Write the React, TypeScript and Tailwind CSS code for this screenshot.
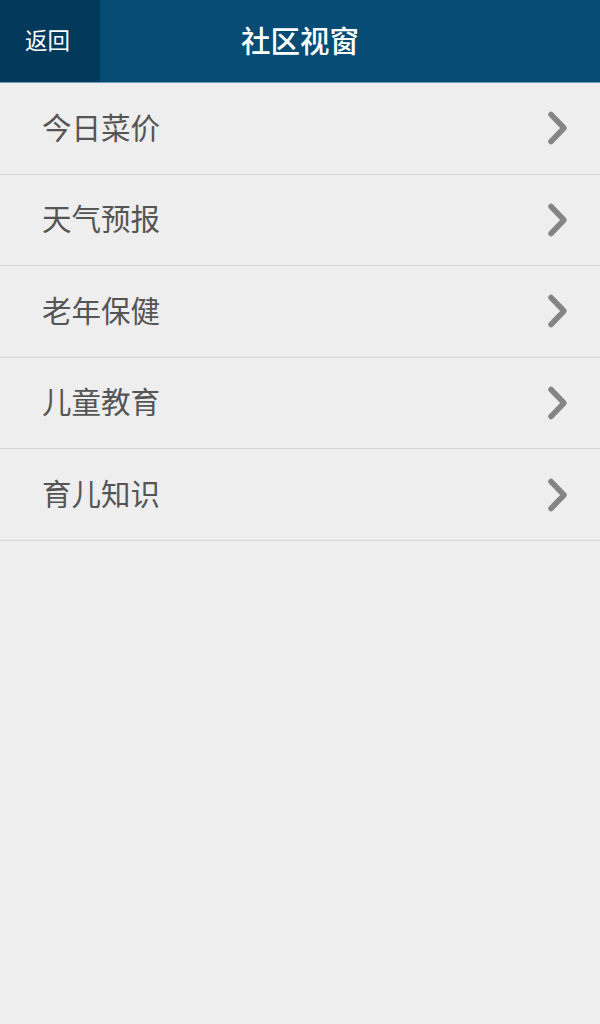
import React from "react";

const items = ["今日菜价", "天气预报", "老年保健", "儿童教育", "育儿知识"];

function Chevron() {
  return (
    <svg width="24" height="36" viewBox="0 0 24 36" className="shrink-0">
      <path d="M5 4.5 L18 18 L5 31.5" fill="none" stroke="#858585" strokeWidth="5.5" strokeLinecap="round" strokeLinejoin="round" />
    </svg>
  );
}

export default function App() {
  return (
    <div
      className="w-[600px] h-[1024px] bg-[#eeeeee] flex flex-col"
      style={{ fontFamily: '"Noto Sans CJK SC", "Noto Sans", sans-serif' }}
    >
      <div className="h-[83px] flex bg-[#064c74] border-b border-[#6d9bb6] relative shrink-0">
        <div className="w-[100px] h-full bg-[#033a5b] flex items-center pl-[25px] pb-[2px] text-white text-[22.5px]">
          返回
        </div>
        <div className="absolute left-0 right-0 top-0 bottom-0 flex items-center justify-center pb-[3px] pointer-events-none text-white text-[29.5px] font-medium">
          社区视窗
        </div>
      </div>
      {items.map((t) => (
        <div
          key={t}
          className="h-[91.6px] flex items-center justify-between pl-[42px] pr-[30px] border-b border-[#d6d6d6] shrink-0"
        >
          <span className="text-[29.5px] text-[#555555] pb-[5px]">{t}</span>
          <Chevron />
        </div>
      ))}
    </div>
  );
}
